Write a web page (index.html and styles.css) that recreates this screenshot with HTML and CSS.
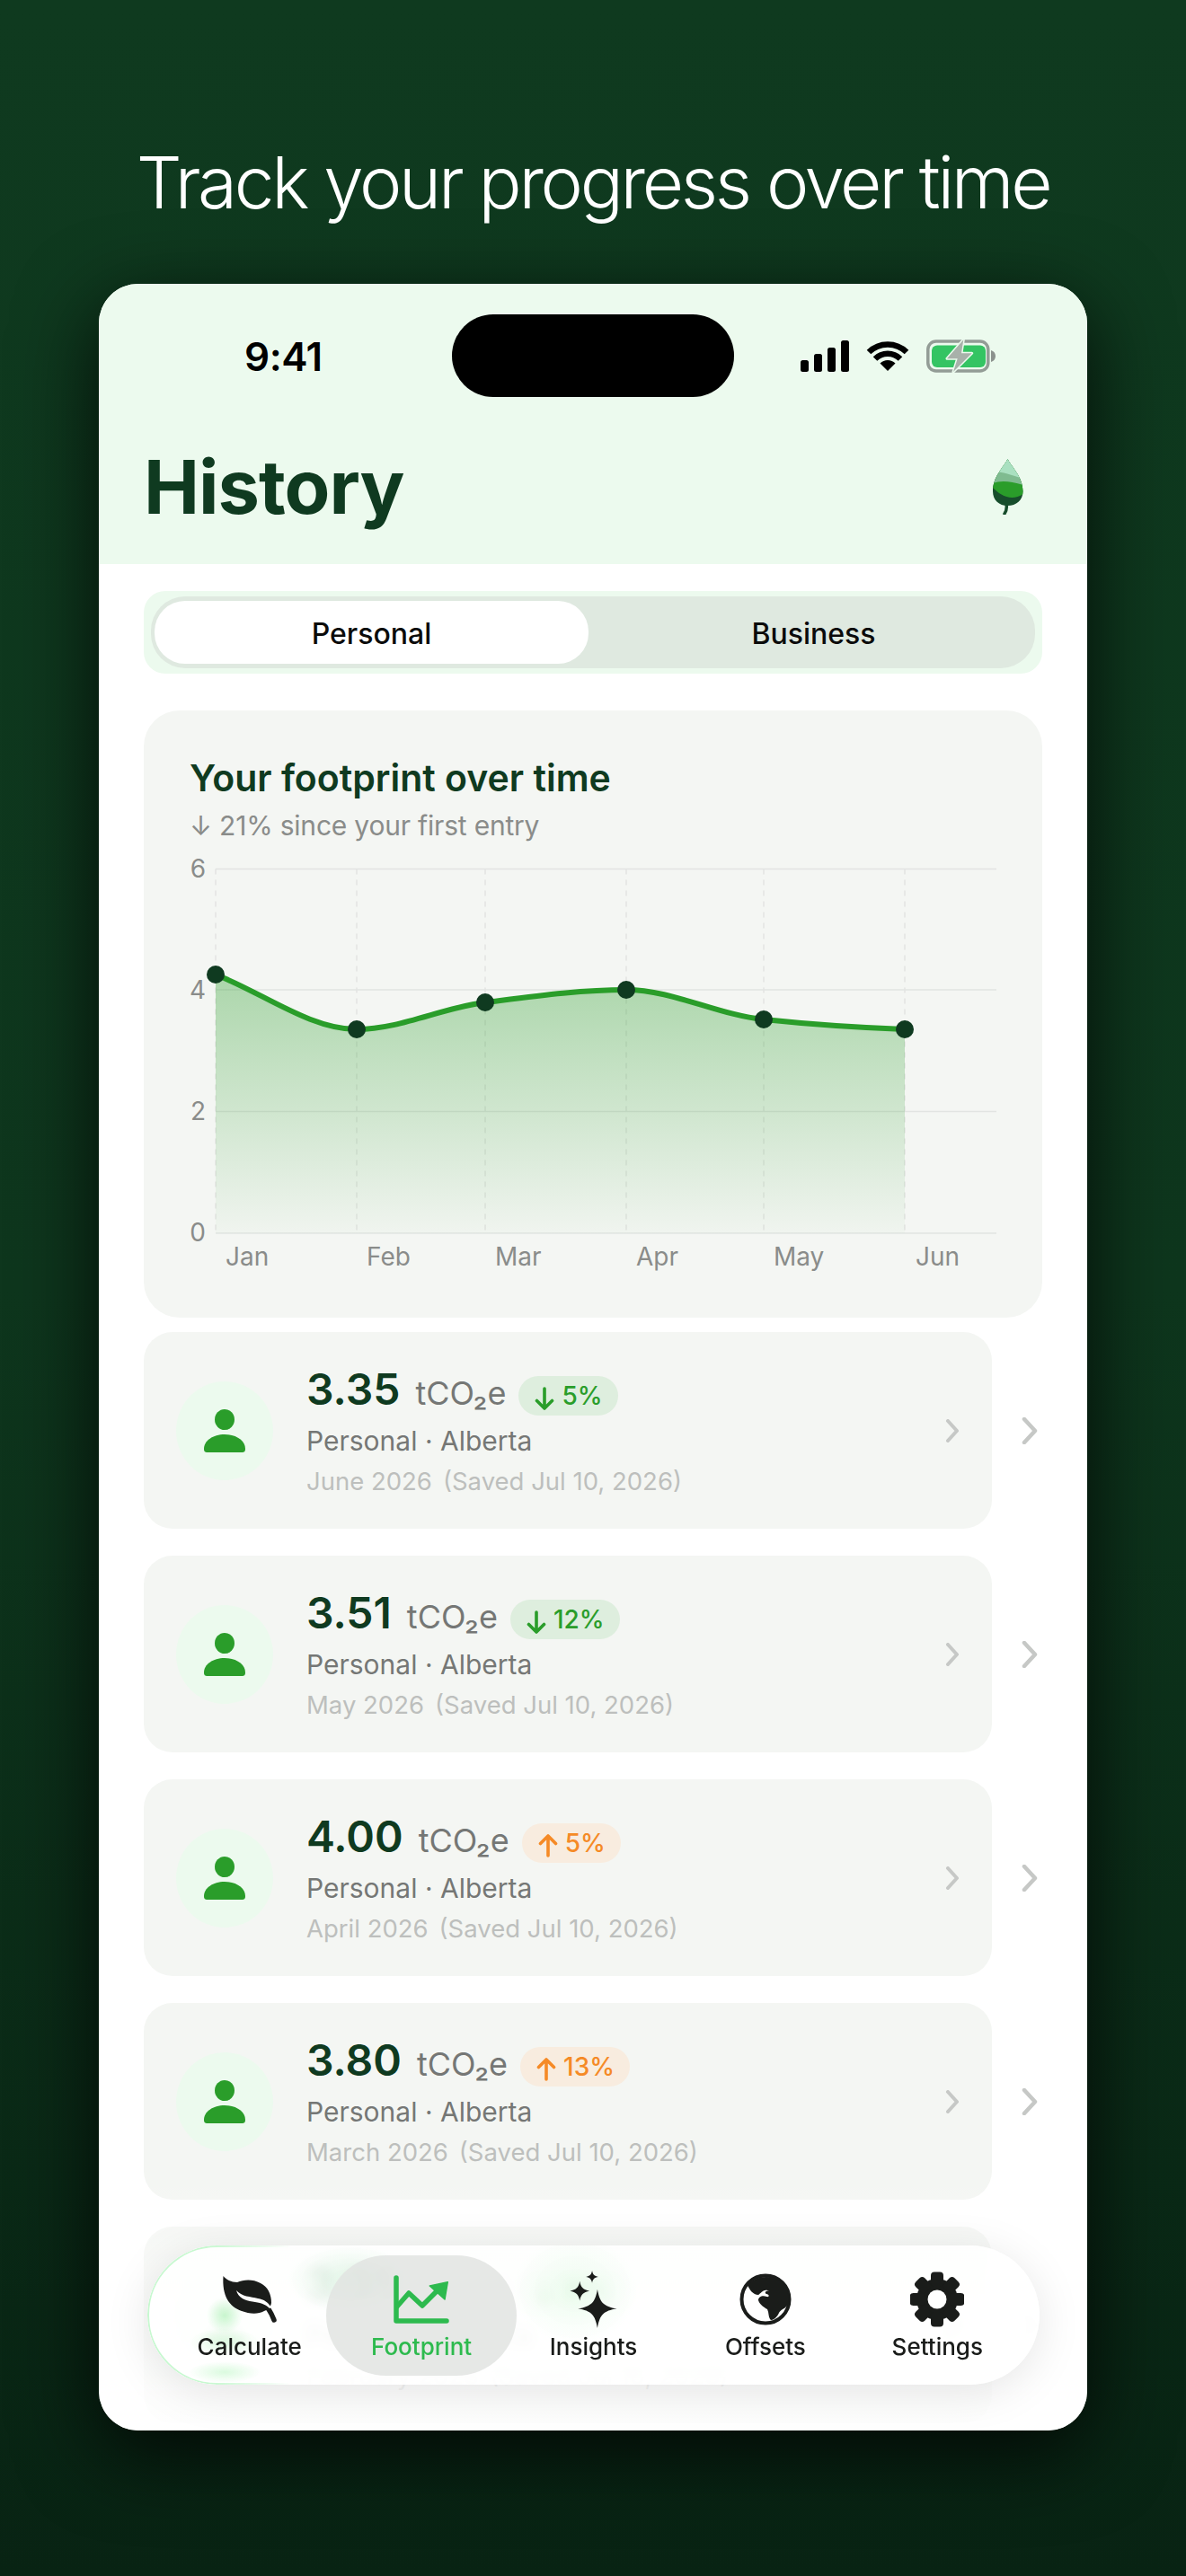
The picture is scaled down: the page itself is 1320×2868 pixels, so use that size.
FILE: index.html
```html
<!DOCTYPE html>
<html lang="en">
<head>
    <meta charset="UTF-8">
    <meta name="viewport" content="width=device-width, initial-scale=1.0">
    <title>History | Track your progress over time</title>
    <link rel="stylesheet" href="styles.css">
</head>
<body>
    <svg class="sprite" aria-hidden="true">
        <symbol id="person" viewBox="0 0 46 48">
            <ellipse cx="23" cy="11.5" rx="11" ry="11.5"/>
            <path d="M0 44C0 35 10 28 23 28S46 35 46 44C46 47 45 48 42 48H4C1 48 0 47 0 44Z"/>
        </symbol>
        <symbol id="chev-small" viewBox="0 0 16 26">
            <path d="M3 2L13 13L3 24" fill="none" stroke="currentColor" stroke-width="4" stroke-linecap="round" stroke-linejoin="round"/>
        </symbol>
        <symbol id="chev-big" viewBox="0 0 18 30">
            <path d="M3 2L15 15L3 28" fill="none" stroke="currentColor" stroke-width="4.5" stroke-linecap="round" stroke-linejoin="round"/>
        </symbol>
        <symbol id="arrow-down" viewBox="0 0 22 26">
            <path d="M11 2V24M2.5 15.5L11 24L19.5 15.5" fill="none" stroke="currentColor" stroke-width="3.6" stroke-linecap="round" stroke-linejoin="round"/>
        </symbol>
        <symbol id="arrow-up" viewBox="0 0 22 26">
            <path d="M11 24V2M2.5 10.5L11 2L19.5 10.5" fill="none" stroke="currentColor" stroke-width="3.6" stroke-linecap="round" stroke-linejoin="round"/>
        </symbol>
    </svg>

    <h1 class="headline">Track your progress over time</h1>

    <main class="phone">
        <header class="phone-top">
            <div class="status">
                <span class="status-time">9:41</span>
                <span class="island"></span>
                <div class="status-icons">
                    <svg width="54" height="35" viewBox="0 0 54 35">
                        <rect x="0" y="22" width="9" height="13" rx="2.5"/>
                        <rect x="15" y="15" width="9" height="20" rx="2.5"/>
                        <rect x="30" y="8" width="9" height="27" rx="2.5"/>
                        <rect x="45" y="0" width="9" height="35" rx="2.5"/>
                    </svg>
                    <svg width="48" height="34" viewBox="0 0 48 34">
                        <path d="M3 13A30 30 0 0 1 45 13" fill="none" stroke="#000" stroke-width="6.5"/>
                        <path d="M10 20.5A20 20 0 0 1 38 20.5" fill="none" stroke="#000" stroke-width="6.5"/>
                        <path d="M24 34L15.5 25.5A12 12 0 0 1 32.5 25.5Z"/>
                    </svg>
                    <svg width="77" height="37" viewBox="0 0 77 37">
                        <rect x="1.8" y="2" width="67" height="33" rx="9" fill="none" stroke="#939c96" stroke-width="3.5"/>
                        <rect x="6" y="6.5" width="60" height="24.5" rx="6" fill="#34c463"/>
                        <path d="M72 12C75 13 77 15 77 18.5S75 24 72 25Z" fill="#8b918d"/>
                        <path d="M41.3 .3L23 21.3H34.7L30 36L50.7 15.3H39Z" fill="#a8b1aa" stroke="#ecfaee" stroke-width="3" paint-order="stroke" stroke-linejoin="round"/>
                    </svg>
                </div>
            </div>
            <div class="title-row">
                <h2 class="page-title">History</h2>
                <svg class="title-leaf" width="34" height="62" viewBox="0 0 34 62">
                    <clipPath id="leaf-clip">
                        <path d="M16.5 0C21 9 33.5 20 33.5 36C33.5 46 26 52 16.5 52S0 46 0 36C0 20 12 9 16.5 0Z"/>
                    </clipPath>
                    <path d="M15 50C16 55 15 58 13 61" fill="none" stroke="#174d2c" stroke-width="3.5" stroke-linecap="round"/>
                    <g clip-path="url(#leaf-clip)">
                        <rect width="34" height="54" fill="#174d2c"/>
                        <path d="M0 32C8 40 20 48 34 39V0H0Z" fill="#2a9d2a"/>
                        <path d="M0 27C8 24 18 24 34 29V0H0Z" fill="#7fbb90"/>
                        <path d="M0 14C12 14 20 18 34 22V0H0Z" fill="#a9e0c0"/>
                    </g>
                </svg>
            </div>
        </header>

        <div class="switch">
            <div class="switch-track">
                <button class="switch-btn active">Personal</button>
                <button class="switch-btn">Business</button>
            </div>
        </div>

        <section class="chart-card">
            <h3 class="chart-title">Your footprint over time</h3>
            <div class="chart-sub">↓ 21% since your first entry</div>
            <svg class="chart" width="897" height="470" viewBox="212 950 897 470">
                <defs>
                    <linearGradient id="area" x1="0" y1="0" x2="0" y2="1">
                        <stop offset="0" stop-color="#2a9d2a" stop-opacity=".36"/>
                        <stop offset="1" stop-color="#2a9d2a" stop-opacity=".02"/>
                    </linearGradient>
                </defs>
                <g class="grid-h">
                    <path d="M240 967.5H1109"/>
                    <path d="M240 1102H1109"/>
                    <path d="M240 1237.5H1109"/>
                    <path d="M240 1373H1109"/>
                </g>
                <g class="grid-v">
                    <path d="M240 967.5V1373"/>
                    <path d="M397 967.5V1373"/>
                    <path d="M540 967.5V1373"/>
                    <path d="M697 967.5V1373"/>
                    <path d="M850 967.5V1373"/>
                    <path d="M1007 967.5V1373"/>
                </g>
                <path fill="url(#area)" d="M240 1085C292 1105 345 1146 397 1146C445 1146 492 1122 540 1116C592 1109.5 645 1102 697 1102C748 1102 799 1130 850 1135C902 1140.5 955 1144 1007 1146V1373H240Z"/>
                <path class="chart-line" d="M240 1085C292 1105 345 1146 397 1146C445 1146 492 1122 540 1116C592 1109.5 645 1102 697 1102C748 1102 799 1130 850 1135C902 1140.5 955 1144 1007 1146"/>
                <g class="chart-dots">
                    <circle cx="240" cy="1085" r="10"/>
                    <circle cx="397" cy="1146" r="10"/>
                    <circle cx="540" cy="1116" r="10"/>
                    <circle cx="697" cy="1102" r="10"/>
                    <circle cx="850" cy="1135" r="10"/>
                    <circle cx="1007" cy="1146" r="10"/>
                </g>
                <g class="axis-y">
                    <text x="229" y="977">6</text>
                    <text x="229" y="1112">4</text>
                    <text x="229" y="1247">2</text>
                    <text x="229" y="1382">0</text>
                </g>
                <g class="axis-x">
                    <text x="251" y="1409">Jan</text>
                    <text x="408" y="1409">Feb</text>
                    <text x="551" y="1409">Mar</text>
                    <text x="708" y="1409">Apr</text>
                    <text x="861" y="1409">May</text>
                    <text x="1019" y="1409">Jun</text>
                </g>
            </svg>
        </section>

        <div class="entries">
            <div class="entry">
                <a class="entry-card">
                    <span class="avatar"><svg width="46" height="48"><use href="#person"/></svg></span>
                    <div class="entry-text">
                        <div class="entry-top">
                            <span class="value">3.35</span>
                            <span class="unit">tCO₂e</span>
                            <span class="pill down"><svg width="22" height="26"><use href="#arrow-down"/></svg>5%</span>
                        </div>
                        <div class="entry-name">Personal · Alberta</div>
                        <div class="entry-date"><span>June 2026</span><span>(Saved Jul 10, 2026)</span></div>
                    </div>
                    <svg class="chev" width="16" height="26"><use href="#chev-small"/></svg>
                </a>
                <svg class="chev" width="18" height="30"><use href="#chev-big"/></svg>
            </div>

            <div class="entry">
                <a class="entry-card">
                    <span class="avatar"><svg width="46" height="48"><use href="#person"/></svg></span>
                    <div class="entry-text">
                        <div class="entry-top">
                            <span class="value">3.51</span>
                            <span class="unit">tCO₂e</span>
                            <span class="pill down"><svg width="22" height="26"><use href="#arrow-down"/></svg>12%</span>
                        </div>
                        <div class="entry-name">Personal · Alberta</div>
                        <div class="entry-date"><span>May 2026</span><span>(Saved Jul 10, 2026)</span></div>
                    </div>
                    <svg class="chev" width="16" height="26"><use href="#chev-small"/></svg>
                </a>
                <svg class="chev" width="18" height="30"><use href="#chev-big"/></svg>
            </div>

            <div class="entry">
                <a class="entry-card">
                    <span class="avatar"><svg width="46" height="48"><use href="#person"/></svg></span>
                    <div class="entry-text">
                        <div class="entry-top">
                            <span class="value">4.00</span>
                            <span class="unit">tCO₂e</span>
                            <span class="pill up"><svg width="22" height="26"><use href="#arrow-up"/></svg>5%</span>
                        </div>
                        <div class="entry-name">Personal · Alberta</div>
                        <div class="entry-date"><span>April 2026</span><span>(Saved Jul 10, 2026)</span></div>
                    </div>
                    <svg class="chev" width="16" height="26"><use href="#chev-small"/></svg>
                </a>
                <svg class="chev" width="18" height="30"><use href="#chev-big"/></svg>
            </div>

            <div class="entry">
                <a class="entry-card">
                    <span class="avatar"><svg width="46" height="48"><use href="#person"/></svg></span>
                    <div class="entry-text">
                        <div class="entry-top">
                            <span class="value">3.80</span>
                            <span class="unit">tCO₂e</span>
                            <span class="pill up"><svg width="22" height="26"><use href="#arrow-up"/></svg>13%</span>
                        </div>
                        <div class="entry-name">Personal · Alberta</div>
                        <div class="entry-date"><span>March 2026</span><span>(Saved Jul 10, 2026)</span></div>
                    </div>
                    <svg class="chev" width="16" height="26"><use href="#chev-small"/></svg>
                </a>
                <svg class="chev" width="18" height="30"><use href="#chev-big"/></svg>
            </div>

            <div class="entry">
                <a class="entry-card">
                    <span class="avatar"><svg width="46" height="48"><use href="#person"/></svg></span>
                    <div class="entry-text">
                        <div class="entry-top">
                            <span class="value">3.35</span>
                            <span class="unit">tCO₂e</span>
                            <span class="pill down"><svg width="22" height="26"><use href="#arrow-down"/></svg>21%</span>
                        </div>
                        <div class="entry-name">Personal · Alberta</div>
                        <div class="entry-date"><span>February 2026</span><span>(Saved Jul 10, 2026)</span></div>
                    </div>
                    <svg class="chev" width="16" height="26"><use href="#chev-small"/></svg>
                </a>
                <svg class="chev" width="18" height="30"><use href="#chev-big"/></svg>
            </div>
        </div>

        <div class="fade"></div>

        <nav class="tabbar">
            <a class="tab">
                <svg class="tab-icon" width="62" height="52" viewBox="0 0 62 52">
                    <path d="M1.5 0C5 4 10 7 17 7C24 4 34 3 43 8C51 12 55 20 55 30C54 36 50 38 47 39C40 43 30 42 22 39C8 34 0 22 1.5 0Z"/>
                    <path d="M45 30C51 34 55 41 58 49" fill="none" stroke="currentColor" stroke-width="5.5" stroke-linecap="round"/>
                    <path d="M16 16C22 23 32 23 40 25C47 26 51 29 55 35L53 36C48 31 42 29.5 34 28.5C26 27.5 18 24 16 16Z" fill="#fff"/>
                </svg>
                <span>Calculate</span>
            </a>
            <a class="tab active">
                <svg class="tab-icon" width="62" height="54" viewBox="0 0 62 54">
                    <path d="M3 3V51H59" fill="none" stroke="currentColor" stroke-width="5.5" stroke-linecap="round" stroke-linejoin="round"/>
                    <path d="M3 36L17 20L32 34L48 18" fill="none" stroke="currentColor" stroke-width="5.5" stroke-linejoin="round"/>
                    <path d="M60.3 7.7L40.3 12L57 27Z" stroke="currentColor" stroke-width="1.5" stroke-linejoin="round"/>
                </svg>
                <span>Footprint</span>
            </a>
            <a class="tab">
                <svg class="tab-icon" width="53" height="65" viewBox="0 0 53 65">
                    <path d="M31 21C33.5 36 38 40.5 53 43C38 45.5 33.5 50 31 65C28.5 50 24 45.5 9 43C24 40.5 28.5 36 31 21Z"/>
                    <path d="M11 12C12.2 19 15 21.8 22 23C15 24.2 12.2 27 11 34C9.8 27 7 24.2 0 23C7 21.8 9.8 19 11 12Z"/>
                    <path d="M25 0C25.8 4.5 27.5 6.2 32 7C27.5 7.8 25.8 9.5 25 14C24.2 9.5 22.5 7.8 18 7C22.5 6.2 24.2 4.5 25 0Z"/>
                </svg>
                <span>Insights</span>
            </a>
            <a class="tab">
                <svg class="tab-icon" width="58" height="58" viewBox="0 0 58 58">
                    <circle cx="29" cy="29" r="26.5" fill="none" stroke="currentColor" stroke-width="4"/>
                    <path d="M9 13C18 2 40 0 50 13C55 21 56 30 53 36C50 40 46 40 44 44C42 49 36 54 34 51C32 48 33 44 31 40C27 38 22 34 21 30C21 26 26 24 30 26C34 27 33 23 30 23C27 22 30 18 33 20C28 16 24 22 21 24C15 24 11 18 9 13Z"/>
                </svg>
                <span>Offsets</span>
            </a>
            <a class="tab">
                <svg class="tab-icon" width="60" height="61" viewBox="0 0 60 61">
                    <g transform="translate(30 30.5)">
                        <circle r="23"/>
                        <rect x="-7" y="-30.5" width="14" height="16" rx="4"/>
                        <rect x="-7" y="-30.5" width="14" height="16" rx="4" transform="rotate(45)"/>
                        <rect x="-7" y="-30.5" width="14" height="16" rx="4" transform="rotate(90)"/>
                        <rect x="-7" y="-30.5" width="14" height="16" rx="4" transform="rotate(135)"/>
                        <rect x="-7" y="-30.5" width="14" height="16" rx="4" transform="rotate(180)"/>
                        <rect x="-7" y="-30.5" width="14" height="16" rx="4" transform="rotate(225)"/>
                        <rect x="-7" y="-30.5" width="14" height="16" rx="4" transform="rotate(270)"/>
                        <rect x="-7" y="-30.5" width="14" height="16" rx="4" transform="rotate(315)"/>
                        <circle r="10.5" fill="#fff"/>
                    </g>
                </svg>
                <span>Settings</span>
            </a>
        </nav>
    </main>
</body>
</html>
```

FILE: styles.css
```css
:root {
    --dark-green: #0f3a20;
    --green: #2a9d2a;
    --tab-green: #2dba4e;
    --mint: #ecfaee;
    --card-bg: #f4f6f3;
    --muted: #8a8c8a;
    --chev: #c6c8c6;
}

* {
    box-sizing: border-box;
}

html {
    background: #082313;
}

body {
    margin: 0;
    height: 2868px;
    overflow: hidden;
    font-family: Inter, "Liberation Sans", sans-serif;
    background: linear-gradient(180deg, #0f3a1f 0%, #0e361d 50%, #082313 100%);
}

.sprite {
    position: absolute;
    width: 0;
    height: 0;
}

.headline {
    margin: 0;
    padding-top: 155px;
    text-align: center;
    color: #fff;
    font-size: 80px;
    line-height: 96px;
    font-weight: 350;
    letter-spacing: -3.3px;
}

.phone {
    position: relative;
    width: 1100px;
    height: 2390px;
    margin: 65px auto 0;
    background: #fff;
    border-radius: 44px;
    overflow: hidden;
    box-shadow: 0 24px 90px rgba(0, 0, 0, 0.8);
}

.phone-top {
    height: 312px;
    background: var(--mint);
    padding-top: 34px;
}

.status {
    display: grid;
    grid-template-columns: 393px 314px 393px;
    align-items: center;
    height: 92px;
}

.status-time {
    padding: 2px 0 0 162px;
    font-size: 44px;
    font-weight: 600;
    color: #000;
    letter-spacing: -0.5px;
}

.island {
    height: 92px;
    background: #000;
    border-radius: 46px;
}

.status-icons {
    display: flex;
    align-items: center;
    gap: 19px;
    padding-left: 74px;
}

.title-row {
    display: flex;
    align-items: center;
    justify-content: space-between;
    margin-top: 50px;
    padding: 0 71px 0 50px;
}

.page-title {
    margin: 0;
    font-size: 83px;
    line-height: 100px;
    font-weight: 700;
    color: var(--dark-green);
    letter-spacing: -1px;
}

.switch {
    height: 92px;
    margin: 30px 50px 0;
    padding: 6px 8px;
    background: var(--mint);
    border-radius: 24px;
}

.switch-track {
    display: flex;
    height: 80px;
    padding: 5px 4px;
    background: #dfe9e0;
    border-radius: 38px;
}

.switch-btn {
    flex: 1;
    border: 0;
    padding: 2px 0 0 8px;
    background: none;
    font-family: inherit;
    font-size: 32px;
    font-weight: 500;
    color: #0b0b0b;
}

.switch-btn.active {
    flex: 0 0 483px;
    padding: 2px 0 0;
    background: #fff;
    border-radius: 34px;
}

.chart-card {
    height: 676px;
    margin: 41px 50px 0;
    padding: 50px 51px 0;
    background: var(--card-bg);
    border-radius: 40px;
}

.chart-title {
    margin: 0;
    font-size: 41px;
    line-height: 50px;
    font-weight: 600;
    color: var(--dark-green);
}

.chart-sub {
    margin-top: 8px;
    font-size: 30px;
    line-height: 40px;
    color: var(--muted);
    letter-spacing: -0.2px;
}

.chart {
    display: block;
    margin: 11px 0 0 1px;
}

.grid-h path {
    stroke: #e2e4e2;
    stroke-width: 1.5;
    fill: none;
}

.grid-v path {
    stroke: #e2e4e2;
    stroke-width: 1.5;
    stroke-dasharray: 6 6;
    fill: none;
}

.chart-line {
    fill: none;
    stroke: var(--green);
    stroke-width: 6;
}

.chart-dots circle {
    fill: var(--dark-green);
}

.axis-y text,
.axis-x text {
    font-size: 28px;
    fill: var(--muted);
}

.axis-y text {
    text-anchor: end;
}

.entries {
    display: flex;
    flex-direction: column;
    gap: 30px;
    margin: 16px 50px 0;
}

.entry {
    display: flex;
    align-items: center;
    justify-content: space-between;
    padding-right: 5px;
    color: var(--chev);
}

.entry-card {
    display: flex;
    align-items: center;
    flex: none;
    width: 944px;
    height: 219px;
    padding: 0 36px;
    background: var(--card-bg);
    border-radius: 32px;
}

.avatar {
    display: flex;
    align-items: center;
    justify-content: center;
    flex: 0 0 108px;
    height: 110px;
    margin-right: 37px;
    background: var(--mint);
    border-radius: 50%;
    fill: var(--green);
}

.entry-text {
    flex: 1;
    padding-top: 6px;
}

.entry-top {
    display: flex;
    align-items: baseline;
}

.value {
    font-size: 48px;
    line-height: 50px;
    font-weight: 600;
    color: var(--dark-green);
}

.unit {
    margin-left: 17px;
    font-size: 36px;
    color: #757775;
}

.pill {
    display: inline-block;
    height: 44px;
    margin-left: 14px;
    padding: 0 17px 0 18px;
    font-size: 28px;
    line-height: 44px;
    font-weight: 500;
    border-radius: 22px;
}

.pill svg {
    vertical-align: -6px;
    margin-right: 8px;
}

.pill.down {
    background: #deeede;
    color: var(--green);
}

.pill.up {
    background: #f8ecdf;
    color: #f58a26;
}

.entry-name {
    margin-top: 6px;
    font-size: 30px;
    line-height: 44px;
    color: #757775;
}

.entry-date {
    display: flex;
    gap: 12px;
    margin-top: 3px;
    font-size: 27.5px;
    line-height: 40px;
    color: #bdbfbd;
}

.fade {
    position: absolute;
    left: 0;
    right: 0;
    bottom: 0;
    height: 280px;
    background: linear-gradient(180deg, rgba(255, 255, 255, 0) 0%, rgba(255, 255, 255, 0.5) 40%, rgba(255, 255, 255, 0.92) 100%);
}

.tabbar {
    position: absolute;
    left: 54px;
    right: 53px;
    bottom: 51px;
    height: 155px;
    display: grid;
    grid-template-columns: repeat(5, 1fr);
    padding: 0 18px;
    background:
        radial-gradient(ellipse 40px 12px at 86px 141px, rgba(90, 235, 110, 0.22), transparent),
        radial-gradient(ellipse 40px 16px at 86px 108px, rgba(90, 235, 110, 0.16), transparent),
        radial-gradient(ellipse 20px 20px at 86px 78px, rgba(90, 235, 110, 0.28), transparent),
        radial-gradient(ellipse 70px 38px at 226px 38px, rgba(80, 200, 110, 0.16), transparent),
        radial-gradient(ellipse 70px 60px at 476px 50px, rgba(90, 235, 110, 0.1), transparent),
        rgba(255, 255, 255, 0.84);
    backdrop-filter: blur(6px);
    border-radius: 78px;
    box-shadow: 0 8px 50px rgba(0, 0, 0, 0.1);
}

/* pale green rim along the left end of the glass bar */
.tabbar::before {
    content: "";
    position: absolute;
    inset: 0;
    border: 2.5px solid rgba(130, 240, 150, 0.45);
    border-radius: 78px;
    -webkit-mask-image: linear-gradient(90deg, #000 0, #000 70px, transparent 160px);
    mask-image: linear-gradient(90deg, #000 0, #000 70px, transparent 160px);
}

.tab {
    position: relative;
    z-index: 0;
    display: flex;
    flex-direction: column;
    align-items: center;
    font-size: 26px;
    line-height: 30px;
    font-weight: 500;
    color: #1a1c1a;
    fill: currentColor;
}

.tab-icon {
    height: 64px;
    margin-top: 28px;
    margin-bottom: 6px;
}

.tab.active {
    color: var(--tab-green);
}

.tab.active::before {
    content: "";
    position: absolute;
    z-index: -1;
    left: -10px;
    right: -10px;
    top: 11px;
    bottom: 10px;
    background: rgba(226, 228, 226, 0.85);
    border-radius: 67px;
}

.chev {
    flex: none;
    color: var(--chev);
}
```
